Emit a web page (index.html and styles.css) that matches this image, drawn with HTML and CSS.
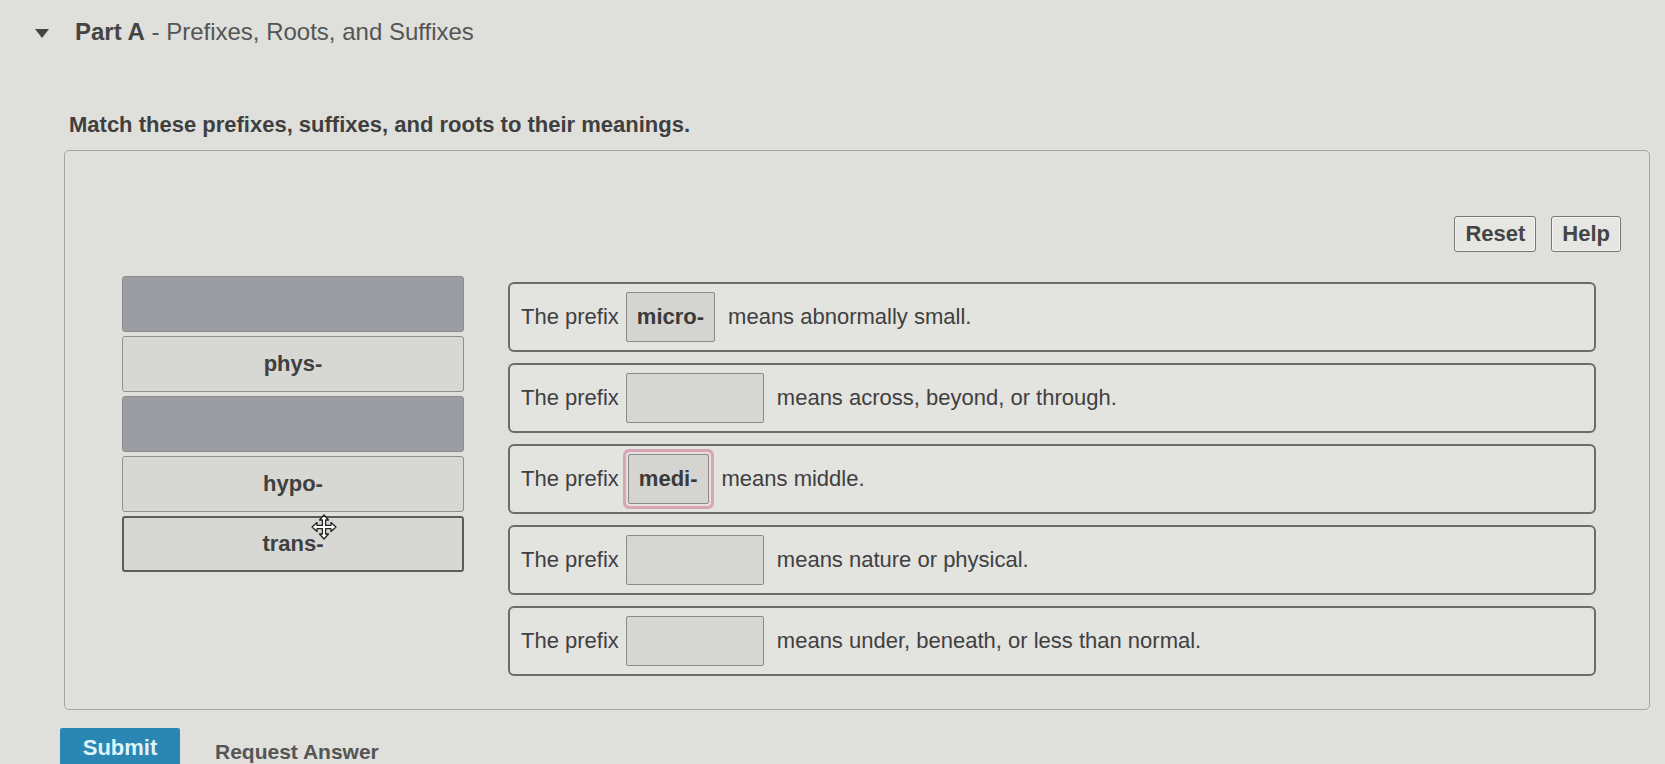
FILE: index.html
```html
<!DOCTYPE html>
<html lang="en">
<head>
<meta charset="utf-8">
<title>Part A - Prefixes, Roots, and Suffixes</title>
<link rel="stylesheet" href="styles.css">
</head>
<body>
<div class="page">
  <div class="part-header">
    <span class="caret"></span>
    <h2 class="part-title"><b>Part A</b> - Prefixes, Roots, and Suffixes</h2>
  </div>
  <p class="instructions">Match these prefixes, suffixes, and roots to their meanings.</p>

  <div class="workspace">
    <div class="toolbar">
      <button class="tool-btn">Reset</button>
      <button class="tool-btn">Help</button>
    </div>
    <div class="board">
      <div class="bank">
        <div class="chip placeholder"></div>
        <div class="chip">phys-</div>
        <div class="chip placeholder"></div>
        <div class="chip">hypo-</div>
        <div class="chip dragging">trans-
          <svg class="move-cursor" viewBox="0 0 26 26" width="26" height="26">
            <path d="M13 1 L17.5 6 L14.6 6 L14.6 11.4 L20 11.4 L20 8.5 L25 13 L20 17.5 L20 14.6 L14.6 14.6 L14.6 20 L17.5 20 L13 25 L8.5 20 L11.4 20 L11.4 14.6 L6 14.6 L6 17.5 L1 13 L6 8.5 L6 11.4 L11.4 11.4 L11.4 6 L8.5 6 Z" fill="#fff" stroke="#222" stroke-width="1.3" stroke-linejoin="round"/>
          </svg>
        </div>
      </div>
      <div class="targets">
        <div class="sentence"><span>The prefix</span><span class="drop filled">micro-</span><span>means abnormally small.</span></div>
        <div class="sentence"><span>The prefix</span><span class="drop"></span><span>means across, beyond, or through.</span></div>
        <div class="sentence"><span>The prefix</span><span class="drop filled focused">medi-</span><span>means middle.</span></div>
        <div class="sentence"><span>The prefix</span><span class="drop"></span><span>means nature or physical.</span></div>
        <div class="sentence"><span>The prefix</span><span class="drop"></span><span>means under, beneath, or less than normal.</span></div>
      </div>
    </div>
  </div>

  <div class="actions">
    <button class="submit">Submit</button>
    <a class="request">Request Answer</a>
  </div>
</div>
</body>
</html>
```

FILE: styles.css
```css
html, body {
  margin: 0;
  padding: 0;
  background: #dfdfdb;
  height: 764px;
  overflow: hidden;
}

.page {
  font-family: "Liberation Sans", Arial, sans-serif;
  color: #3d3d3d;
}

.part-header {
  display: flex;
  align-items: center;
  padding: 17px 0 0 35px;
  height: 30px;
}

.caret {
  width: 0;
  height: 0;
  border-left: 7px solid transparent;
  border-right: 7px solid transparent;
  border-top: 9px solid #444;
  margin-right: 26px;
  margin-top: 2px;
}

.part-title {
  margin: 0;
  font-size: 24px;
  line-height: 30px;
  font-weight: normal;
  color: #555;
}

.part-title b {
  color: #444;
}

.instructions {
  margin: 65px 0 0 69px;
  font-size: 22px;
  line-height: 26px;
  font-weight: bold;
  color: #3f3f3f;
}

.workspace {
  margin: 12px 15px 0 64px;
  height: 560px;
  border: 1px solid #a4a4a0;
  border-radius: 5px;
  box-sizing: border-box;
  padding: 65px 28px 0 57px;
}

.toolbar {
  display: flex;
  justify-content: flex-end;
  gap: 15px;
}

.tool-btn {
  font-family: "Liberation Sans", Arial, sans-serif;
  font-size: 22px;
  font-weight: bold;
  color: #454545;
  background: #e6e6e3;
  border: 1.5px solid #777;
  border-radius: 3px;
  height: 36px;
  padding: 0 10px;
  box-shadow: inset 0 0 0 1px #f2f2f0;
}

.board {
  display: flex;
  gap: 44px;
  margin-top: 24px;
  padding-right: 25px;
}

.bank {
  width: 342px;
  flex: none;
  display: flex;
  flex-direction: column;
  gap: 4px;
}

.chip {
  position: relative;
  height: 56px;
  box-sizing: border-box;
  border: 1.5px solid #8e8e8c;
  border-radius: 3px;
  background: #d7d7d3;
  display: flex;
  align-items: center;
  justify-content: center;
  font-size: 22px;
  font-weight: bold;
  color: #404040;
}

.chip.placeholder {
  background: #9c9ca3;
  border-color: #8a8a90;
}

.chip.dragging {
  border: 2px solid #5c5c5c;
}

.move-cursor {
  position: absolute;
  left: 187px;
  top: -4px;
}

.targets {
  flex: 1;
  display: flex;
  flex-direction: column;
  gap: 11px;
  margin-top: 6px;
}

.sentence {
  height: 70px;
  box-sizing: border-box;
  border: 2px solid #6b6b6b;
  border-radius: 6px;
  background: #e3e3e0;
  display: flex;
  align-items: center;
  padding-left: 11px;
  font-size: 22px;
  color: #404040;
}

.drop {
  height: 50px;
  width: 138px;
  box-sizing: border-box;
  margin: 0 13px 0 7px;
  background: #d6d6d3;
  border: 1.5px solid #8a8a88;
  border-radius: 2px;
  display: flex;
  align-items: center;
  justify-content: center;
  font-weight: bold;
}

.drop.filled {
  width: auto;
  padding: 0 10px;
  background: #d4d4d1;
  color: #3a3a3a;
}

.drop.focused {
  margin-left: 9px;
  box-shadow: 0 0 0 2px #e6dfe1, 0 0 0 5px #d7a6b5;
}

.actions {
  display: flex;
  align-items: flex-start;
  margin: 18px 0 0 60px;
  gap: 35px;
}

.submit {
  width: 120px;
  height: 46px;
  padding: 7px 0 0;
  border: none;
  border-radius: 2px 2px 0 0;
  background: #2a87b4;
  color: #dff3f8;
  font-family: "Liberation Sans", Arial, sans-serif;
  font-size: 22px;
  font-weight: bold;
  line-height: 26px;
  display: flex;
  justify-content: center;
  align-items: flex-start;
}

.request {
  font-size: 21px;
  font-weight: bold;
  color: #555;
  line-height: 26px;
  padding-top: 11px;
}
```
